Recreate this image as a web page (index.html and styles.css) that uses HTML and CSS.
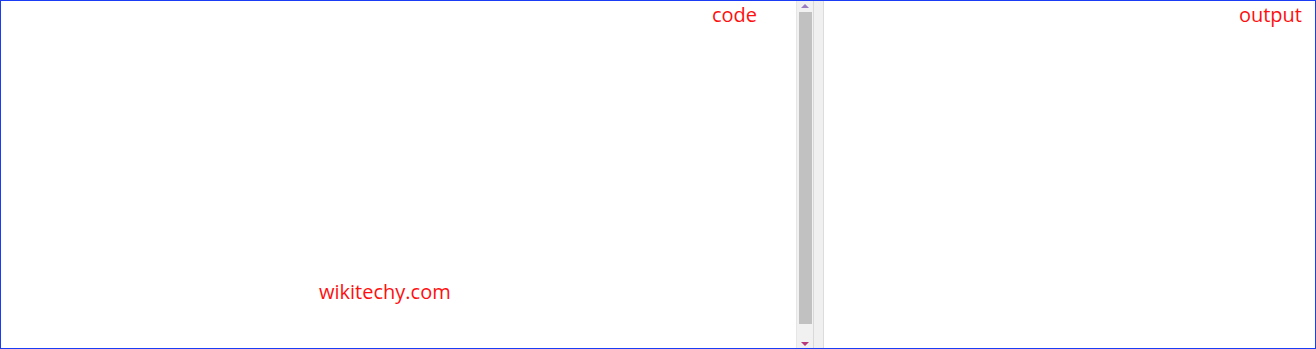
FILE: index.html
```html
<!DOCTYPE html>
<html>
<head>
<meta charset="utf-8">
<link rel="stylesheet" href="styles.css">
</head>
<body>
<div class="frame">
  <div class="pane code-pane">
    <div class="label code-label">code</div>
    <div class="spacer"></div>
    <div class="label site-label">wikitechy.com</div>
  </div>
  <div class="scrollbar">
    <div class="arrow arrow-up"></div>
    <div class="thumb"></div>
    <div class="arrow arrow-down"></div>
  </div>
  <div class="splitter"></div>
  <div class="pane output-pane">
    <div class="label output-label">output</div>
  </div>
</div>
</body>
</html>
```

FILE: styles.css
```css
html, body {
  margin: 0;
  padding: 0;
  background: #ffffff;
}
.frame {
  box-sizing: border-box;
  width: 1316px;
  height: 349px;
  border: 1px solid #1a3cf5;
  display: flex;
  font-family: "Open Sans", "Noto Sans", sans-serif;
}
.pane {
  display: flex;
  flex-direction: column;
  background: #ffffff;
}
.code-pane {
  width: 795px;
  flex: none;
}
.label {
  color: #ff1010;
  font-size: 20px;
  line-height: 27px;
}
.code-label {
  align-self: flex-end;
  margin: 0 39px 0 0;
}
.spacer {
  flex: 1;
}
.site-label {
  margin: 0 0 43px 318px;
}
.scrollbar {
  width: 17px;
  flex: none;
  background: #f1f1f1;
  display: flex;
  flex-direction: column;
  align-items: center;
  border-left: 1px solid #e6e6e6;
  box-sizing: border-box;
}
.arrow {
  width: 0;
  height: 0;
  border-left: 4px solid transparent;
  border-right: 4px solid transparent;
}
.arrow-up {
  margin-top: 3px;
  border-bottom: 4px solid #9a7cc0;
}
.arrow-down {
  margin-bottom: 2px;
  border-top: 4px solid #b83a7a;
}
.thumb {
  width: 13px;
  margin: 4px 0 18px;
  flex: 1;
  background: #c1c1c1;
}
.splitter {
  width: 11px;
  flex: none;
  box-sizing: border-box;
  background: #f0f0f0;
  border-left: 1px solid #d9d9d9;
  border-right: 1px solid #dcdcdc;
}
.output-pane {
  flex: 1;
  align-items: flex-end;
}
.output-label {
  margin: 0 13px 0 0;
}
```
